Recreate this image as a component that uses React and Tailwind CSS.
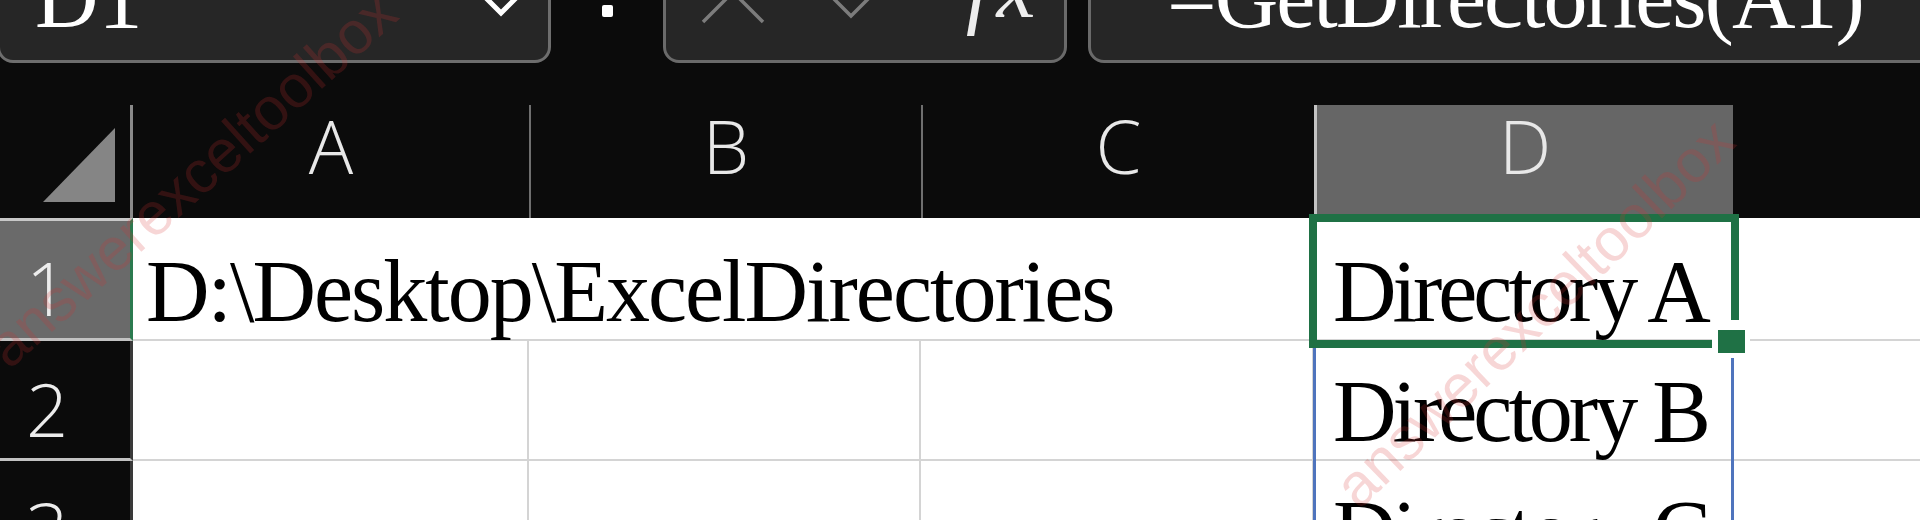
const SERIF = "font-['Liberation_Serif','Noto_Sans_CJK_TC',serif]";
const SANS = "font-['Open_Sans','Noto_Sans',sans-serif]";

function TopBar() {
  return (
    <div className="flex h-[63px] shrink-0 items-end">
      {/* Name box */}
      <div className="-ml-[3px] flex h-[120px] w-[554px] shrink-0 items-end justify-between rounded-[16px] border-[3px] border-[#6e6e6e] bg-[#262626]">
        <span className={`${SERIF} pb-[18px] pl-[35px] text-[88px] leading-[88px] text-white`}>D1</span>
        <svg className="mb-[43px] mr-[27px]" width="40" height="32" viewBox="0 0 40 32">
          <path d="M2 10 L20 28 L38 10" fill="none" stroke="#ffffff" strokeWidth="5" strokeLinejoin="miter" />
        </svg>
      </div>
      {/* vertical dots */}
      <div className="flex w-[112px] shrink-0 justify-center pb-[46px]">
        <div className="h-[12px] w-[11px] rounded-[2px] bg-white" />
      </div>
      {/* cancel / enter / fx */}
      <div className="flex h-[120px] w-[404px] shrink-0 items-end rounded-[16px] border-[3px] border-[#6a6a6a] bg-[#262626]">
        <svg className="mb-[35px] ml-[34px] shrink-0" width="68" height="65" viewBox="0 0 68 65">
          <path d="M3 2 L63 62 M63 2 L3 62" stroke="#7c7c7c" strokeWidth="3.5" fill="none" />
        </svg>
        <svg className="mb-[40px] ml-[50px] shrink-0" width="90" height="60" viewBox="0 0 90 60">
          <path d="M8 31 L33 56 L82 7" stroke="#7c7c7c" strokeWidth="3.5" fill="none" />
        </svg>
        <span className={`${SERIF} mb-[28px] ml-[58px] text-[88px] italic leading-[88px] tracking-[6px] text-[#ededed]`}>fx</span>
      </div>
      {/* formula box */}
      <div className="ml-[21px] flex h-[120px] w-[900px] shrink-0 items-end rounded-[16px] border-[3px] border-[#6a6a6a] bg-[#262626] pb-[18px] pl-[76px]">
        <span className={`${SERIF} whitespace-nowrap text-[88px] leading-[88px] tracking-[-2px] text-white`}>=GetDirectories(A1)</span>
      </div>
    </div>
  );
}

function ColHead({ label, className }) {
  return (
    <div className={`flex shrink-0 items-start justify-center pt-[4px] ${className}`}>
      <span className={`${SANS} text-[74px] font-light leading-[74px] text-[#e8e8e8]`}>{label}</span>
    </div>
  );
}

function HeaderRow() {
  return (
    <div className="flex h-[113px] shrink-0 bg-[#0b0b0b]">
      <div className="flex w-[133px] shrink-0 items-end justify-end border-r-[3px] border-[#8a8a8a] pb-[16px] pr-[15px]">
        <svg width="72" height="74" viewBox="0 0 72 74">
          <polygon points="72,0 72,74 0,74" fill="#858585" />
        </svg>
      </div>
      <ColHead label="A" className="w-[396px]" />
      <ColHead label="B" className="w-[392px] border-l-2 border-[#6f6f6f]" />
      <ColHead label="C" className="w-[393px] border-l-2 border-[#6f6f6f]" />
      <ColHead label="D" className="w-[419px] border-l-[3px] border-[#c4c4c4] bg-[#666666]" />
      <ColHead label="E" className="w-[420px]" />
    </div>
  );
}

function CellText({ children, className = "" }) {
  return (
    <span className={`${SERIF} whitespace-nowrap text-[88px] leading-[88px] text-black ${className}`}>{children}</span>
  );
}

function Row({ n, first, a, d }) {
  return (
    <div className={`flex shrink-0 ${first ? "h-[123px]" : "h-[120px]"}`}>
      <div
        className={`flex w-[133px] shrink-0 items-end border-b-[3px] border-b-[#c2c2c2] pl-[26px] ${
          first
            ? "border-t-[3px] border-t-[#c8c8c8] border-r-[3px] border-r-[#2b7a4f] bg-[#6a6a6a] pb-[13px]"
            : "border-r-[3px] border-r-[#3a3a3a] bg-[#0b0b0b] pb-[12px]"
        }`}
      >
        <span className={`${SANS} text-[74px] font-light leading-[74px] text-[#ececec]`}>{n}</span>
      </div>
      <div className={`flex w-[396px] shrink-0 items-end border-b-2 border-[#d4d4d4] pb-[3px] pl-[13px] ${first ? "" : "border-r-2"}`}>
        {a && <CellText className="tracking-[-2px]">{a}</CellText>}
      </div>
      <div className={`w-[392px] shrink-0 border-b-2 border-[#d4d4d4] ${first ? "" : "border-r-2"}`} />
      <div className="w-[393px] shrink-0 border-b-2 border-r-2 border-[#d4d4d4]" />
      <div className="flex w-[419px] shrink-0 items-end border-b-2 border-r-2 border-[#d4d4d4] pb-[3px] pl-[19px]">
        {d && <CellText className="tracking-[-4px]">{d}</CellText>}
      </div>
      <div className="w-[420px] shrink-0 border-b-2 border-[#d4d4d4]" />
    </div>
  );
}

export default function App() {
  return (
    <div className="relative flex h-[520px] w-[1920px] flex-col overflow-hidden bg-[#0b0b0b]">
      <TopBar />
      <div className="h-[42px] shrink-0" />
      <div className="relative flex flex-col">
        <HeaderRow />
        <div className="flex flex-col bg-white">
          <Row n="1" first a={"D:\\Desktop\\ExcelDirectories"} d="Directory A" />
          <Row n="2" d="Directory B" />
          <Row n="3" d="Directory C" />
        </div>
        {/* spill range border */}
        <div className="pointer-events-none absolute left-[1313px] top-[113px] h-[420px] w-[421px] border-x-[3px] border-[#4f74bd]" />
        {/* active cell */}
        <div className="pointer-events-none absolute left-[1309px] top-[109px] h-[134px] w-[430px] border-[8px] border-[#1f7145]" />
        {/* fill handle */}
        <div className="pointer-events-none absolute left-[1712px] top-[215px] h-[38px] w-[38px] border-b-[5px] border-l-[6px] border-r-[5px] border-t-[10px] border-white bg-[#1f7145]" />
      </div>
      {/* watermarks */}
      <span className="pointer-events-none absolute left-[16px] top-[318px] origin-bottom-left -rotate-[42deg] whitespace-nowrap font-['Liberation_Sans',sans-serif] text-[60px] leading-[60px] text-[rgba(215,50,50,0.2)]">
        answerexceltoolbox
      </span>
      <span className="pointer-events-none absolute left-[1366px] top-[458px] origin-bottom-left -rotate-[44deg] whitespace-nowrap font-['Liberation_Sans',sans-serif] text-[60px] leading-[60px] text-[rgba(215,50,50,0.2)]">
        answerexceltoolbox
      </span>
    </div>
  );
}
